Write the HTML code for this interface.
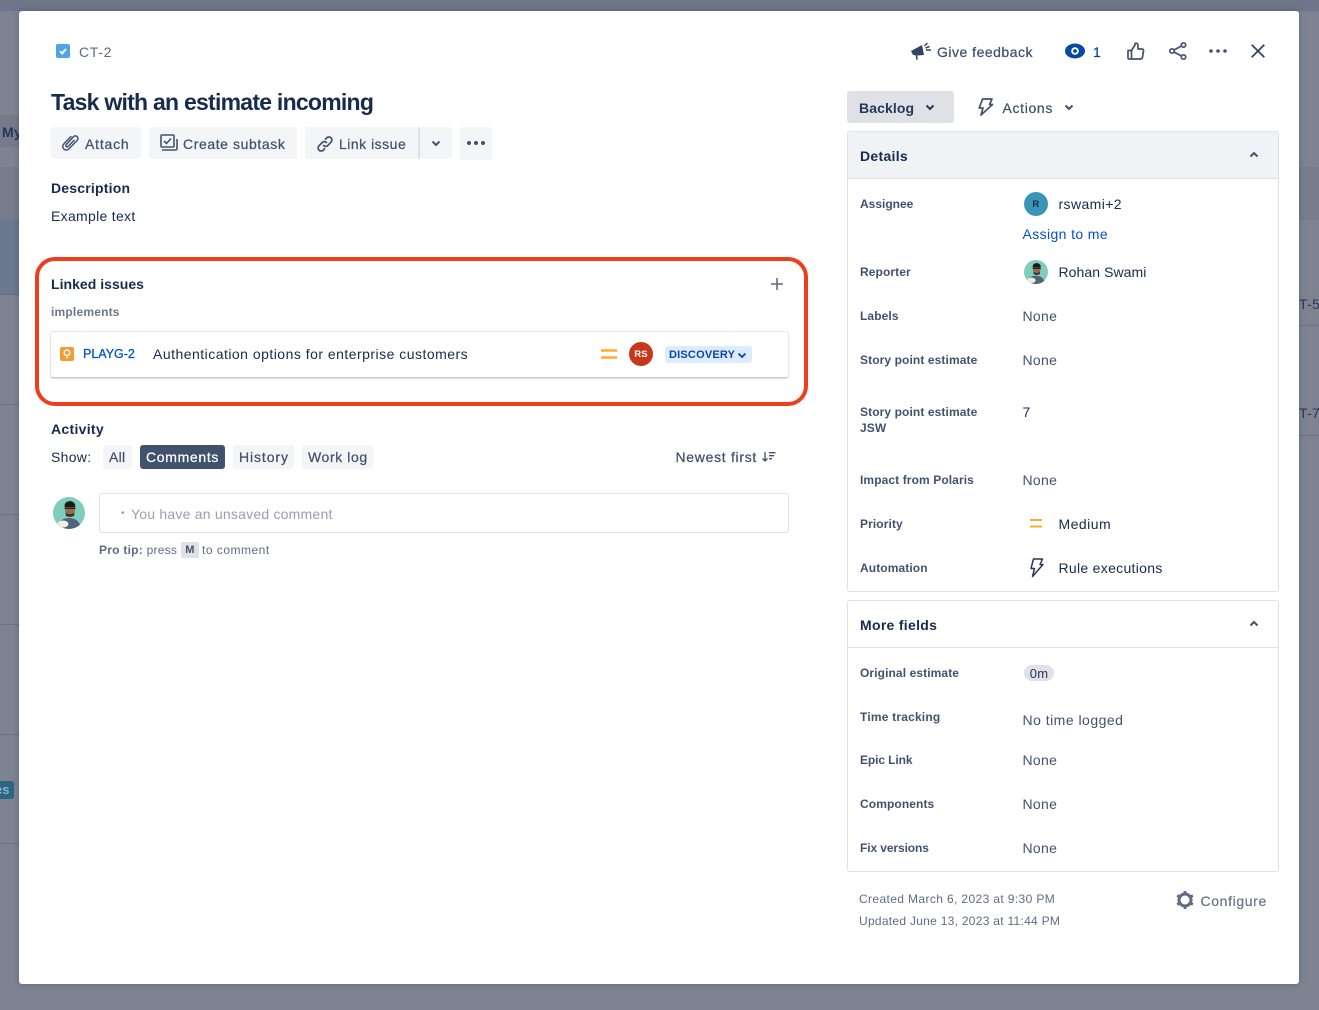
<!DOCTYPE html>
<html><head><meta charset="utf-8"><style>
html,body{margin:0;padding:0;width:1319px;height:1010px;overflow:hidden;background:#7d8391;font-family:"Liberation Sans",sans-serif}
.a,.t{position:absolute}
.t{white-space:nowrap;line-height:20px;font-size:14px;color:#172b4d;letter-spacing:.3px}
.b{font-weight:700}
.l{font-size:12px;font-weight:700;color:#42526e;letter-spacing:.1px}
.n{color:#42526e}
.m{-webkit-text-stroke:.25px currentColor}
.btn{position:absolute;background:#f4f5f7;border-radius:3px}
svg{position:absolute;overflow:visible}
</style></head><body>
<!-- background -->
<div class="a" style="left:0;top:0;width:1319px;height:11px;background:#6d7789"></div>
<div class="a" style="left:0;top:115px;width:19px;height:32px;background:#757b8b"></div>
<div class="a" style="left:0;top:167px;width:19px;height:53px;background:#767c8b"></div>
<div class="a" style="left:0;top:220px;width:19px;height:74px;background:#6b7890"></div>
<div class="a" style="left:0;top:294px;width:19px;height:1px;background:#656c7c"></div>
<div class="a" style="left:0;top:404px;width:19px;height:1px;background:#6c7282"></div>
<div class="a" style="left:0;top:514px;width:19px;height:1px;background:#6c7282"></div>
<div class="a" style="left:0;top:624px;width:19px;height:1px;background:#6c7282"></div>
<div class="a" style="left:0;top:734px;width:19px;height:1px;background:#6c7282"></div>
<div class="a" style="left:0;top:843px;width:19px;height:1px;background:#6c7282"></div>
<div class="a" style="left:1299px;top:167px;width:20px;height:53px;background:#767c8b"></div>
<div class="a" style="left:1299px;top:325px;width:20px;height:1px;background:#6c7282"></div>
<div class="a" style="left:1299px;top:435px;width:20px;height:1px;background:#6c7282"></div>
<div class="t b" style="left:2px;top:122px;color:#253858">My</div>
<div class="t" style="left:1299px;top:294px;color:#253858">T-5</div>
<div class="t" style="left:1299px;top:403px;color:#253858">T-7</div>
<div class="a" style="left:0;top:781px;width:14px;height:18px;background:#2a6584;border-radius:0 3px 3px 0;overflow:hidden"><span class="t b" style="left:-5px;top:-1px;color:#8fb0c2;font-size:13px;letter-spacing:0">es</span></div>

<!-- modal -->
<div class="a" style="left:19px;top:11px;width:1280px;height:973px;background:#fff;border-radius:3px;box-shadow:0 0 6px rgba(40,50,70,.35)"></div>

<!-- header -->
<svg style="left:56px;top:44px" width="14" height="14"><rect width="14" height="14" rx="2" fill="#4fa3e8"/><path d="M4 7.200l2.200 2.200L10 5" fill="none" stroke="#fff" stroke-width="2"/></svg>
<div class="t" style="left:79px;top:42px;color:#5e6c84;letter-spacing:.7px">CT-2</div>
<div class="t b" style="left:51px;top:86px;font-size:23px;line-height:32px;letter-spacing:-.75px;color:#172b4d">Task with an estimate incoming</div>

<!-- action buttons -->
<div class="btn" style="left:51px;top:127px;width:90px;height:32px"></div>
<svg style="left:61px;top:134px" width="19" height="19" viewBox="0 0 19 19" fill="none" stroke="#42526e" stroke-width="1.500" stroke-linecap="round"><path d="M10 2.500L2.800 10a3.500 3.500 0 0 0 5 5l8.400-8.600a2.600 2.600 0 0 0-3.700-3.700L5.200 10.600a1.300 1.300 0 0 0 1.900 1.900l6-6.200"/></svg>
<div class="t m" style="left:85px;top:134px;color:#42526e;letter-spacing:.8px">Attach</div>
<div class="btn" style="left:149px;top:127px;width:148px;height:32px"></div>
<svg style="left:160px;top:134px" width="19" height="19" viewBox="0 0 19 19" fill="none" stroke="#42526e" stroke-width="1.600"><rect x="1" y="1" width="13" height="12" rx="1"/><path d="M4 7l2.500 2.500L11 4.500"/><path d="M2 16h13.500a1.500 1.500 0 0 0 1.500-1.500V5"/></svg>
<div class="t m" style="left:183px;top:134px;color:#42526e;letter-spacing:.59px">Create subtask</div>
<div class="btn" style="left:305px;top:127px;width:113px;height:32px"></div>
<div class="a" style="left:418px;top:127px;width:2px;height:32px;background:#dfe1e6"></div>
<div class="btn" style="left:420px;top:127px;width:32px;height:32px"></div>
<svg style="left:316px;top:135px" width="18" height="18" viewBox="0 0 18 18" fill="none" stroke="#42526e" stroke-width="1.700" stroke-linecap="round"><path d="M7.500 10.500a3 3 0 0 0 4.300 0l3.200-3.300a3 3 0 0 0-4.300-4.300L9.500 4.200"/><path d="M10.500 7.500a3 3 0 0 0-4.300 0L3 10.800a3 3 0 0 0 4.300 4.300l1.200-1.300"/></svg>
<div class="t m" style="left:339px;top:134px;color:#42526e;letter-spacing:.5px">Link issue</div>
<svg style="left:431px;top:140px" width="10" height="7"><path d="M1.500 1.500L5 5l3.500-3.500" fill="none" stroke="#42526e" stroke-width="2"/></svg>
<div class="btn" style="left:460px;top:127px;width:32px;height:33px"></div>
<svg style="left:467px;top:141px" width="18" height="4" fill="#42526e"><circle cx="2" cy="2" r="2"/><circle cx="9" cy="2" r="2"/><circle cx="16" cy="2" r="2"/></svg>

<div class="t b" style="left:51px;top:178px;letter-spacing:.2px">Description</div>
<div class="t" style="left:51px;top:206px">Example text</div>

<!-- Linked issues highlight -->
<div class="a" style="left:35px;top:257px;width:765px;height:141px;border:4px solid #ee3f1c;border-radius:20px"></div>
<div class="t b" style="left:51px;top:274px;letter-spacing:.03px">Linked issues</div>
<svg style="left:771px;top:278px" width="12" height="12"><path d="M6 0v12M0 6h12" stroke="#5e6c84" stroke-width="1.600"/></svg>
<div class="t b" style="left:51px;top:302px;font-size:12px;color:#6b778c;letter-spacing:.2px">implements</div>
<div class="a" style="left:50px;top:331px;width:737px;height:45px;border:1px solid #e4e6ea;border-bottom:1px solid #c9ccd4;border-radius:3px;box-shadow:0 1px 1px rgba(9,30,66,.15)"></div>
<svg style="left:60px;top:347px" width="14" height="14" viewBox="0 0 14 14"><rect width="14" height="14" rx="2" fill="#f79a33"/><circle cx="7" cy="5.800" r="2.800" fill="none" stroke="#fff" stroke-width="1.500"/><path d="M5.800 10.500h2.400" stroke="#fff" stroke-width="1.500"/></svg>
<div class="t m" style="left:83px;top:344px;font-size:12.500px;color:#0052cc;letter-spacing:0">PLAYG-2</div>
<div class="t" style="left:153px;top:344px;letter-spacing:.48px">Authentication options for enterprise customers</div>
<svg style="left:601px;top:349px" width="16" height="10"><path d="M0 1.500h16M0 8.500h16" stroke="#ffab2e" stroke-width="2.400"/></svg>
<div class="a" style="left:629px;top:342px;width:24px;height:24px;border-radius:50%;background:#c9371a"></div>
<div class="t b" style="left:629px;top:344.500px;width:24px;text-align:center;font-size:9.500px;color:#fff;letter-spacing:.2px">RS</div>
<div class="a" style="left:665px;top:346px;width:87px;height:17px;background:#deebff;border-radius:3px"></div>
<div class="t b" style="left:669px;top:344.500px;font-size:11px;color:#0747a6;letter-spacing:.2px">DISCOVERY</div>
<svg style="left:737px;top:352px" width="10" height="7"><path d="M1.500 1.500L5 5l3.500-3.500" fill="none" stroke="#0747a6" stroke-width="1.800"/></svg>

<!-- Activity -->
<div class="t b" style="left:51px;top:419px">Activity</div>
<div class="t" style="left:51px;top:447px">Show:</div>
<div class="btn" style="left:103px;top:445px;width:29px;height:24px"></div>
<div class="t m" style="left:109px;top:447px;color:#42526e">All</div>
<div class="btn" style="left:140px;top:445px;width:85px;height:24px;background:#42526e"></div>
<div class="t m" style="left:146px;top:447px;color:#fff;letter-spacing:.67px">Comments</div>
<div class="btn" style="left:233px;top:445px;width:61px;height:24px"></div>
<div class="t m" style="left:239px;top:447px;color:#42526e;letter-spacing:.9px">History</div>
<div class="btn" style="left:302px;top:445px;width:71px;height:24px"></div>
<div class="t m" style="left:308px;top:447px;color:#42526e;letter-spacing:.6px">Work log</div>
<div class="t m" style="left:675.500px;top:447px;color:#42526e;letter-spacing:.7px">Newest first</div>
<svg style="left:762px;top:452px" width="14" height="10" fill="none" stroke="#42526e" stroke-width="1.300"><path d="M3 0v9M.5 6.500L3 9l2.500-2.500"/><path d="M7 .7h6.500M7 3.700h5M7 6.700h3"/></svg>

<svg style="left:53px;top:497px" width="32" height="32" viewBox="0 0 32 32"><defs><clipPath id="c1"><circle cx="16" cy="16" r="16"/></clipPath></defs><g clip-path="url(#c1)"><rect width="32" height="32" fill="#7fcdbb"/><path d="M4 32c1-8 6-11 12-11s11 3 12 11z" fill="#4f6478"/><ellipse cx="17" cy="12" rx="5" ry="7" fill="#9a6a4c"/><path d="M11.500 9c0-6 10-7 11 0l-1 1H12z" fill="#1f1a1a"/><path d="M12.500 15c1 3 8 3 9 0l-.5 4-4 1-4-1z" fill="#3a2e28"/><rect x="11.500" y="10.500" width="11" height="1.500" fill="#1d2b2b"/><ellipse cx="10" cy="27" rx="5.500" ry="3.500" fill="#f3efe3"/></g></svg>
<div class="a" style="left:99px;top:493px;width:688px;height:38px;border:1px solid #dfe1e6;border-radius:3px"></div>
<div class="t" style="left:121px;top:504px;color:#97a0af;font-size:10px">•</div>
<div class="t" style="left:131px;top:504px;color:#97a0af;letter-spacing:.22px">You have an unsaved comment</div>
<div class="t" style="left:99px;top:540px;font-size:12px;color:#5e6c84;letter-spacing:.25px"><b>Pro tip:</b> press</div>
<div class="a" style="left:181px;top:542px;width:18px;height:16px;background:#dfe1e6;border-radius:2px"></div>
<div class="t b" style="left:181px;top:540px;width:18px;text-align:center;font-size:11px;color:#42526e">M</div>
<div class="t" style="left:202px;top:540px;font-size:12px;color:#5e6c84;letter-spacing:.5px">to comment</div>

<!-- top right -->
<svg style="left:910px;top:41px" width="22" height="20" viewBox="0 0 22 20" fill="#344563"><path d="M1 10l11-6 2 10-6 .5-5-.5z"/><path d="M5.500 14l1 5 1.500-.5-1-4.500z"/><path d="M14.500 5l3-3M16 9h5M15.500 7l4-1.500" stroke="#344563" stroke-width="1.500"/></svg>
<div class="t m" style="left:937px;top:42px;color:#42526e;letter-spacing:.5px">Give feedback</div>
<svg style="left:1065px;top:43px" width="20" height="16" viewBox="0 0 20 16"><ellipse cx="10" cy="8" rx="10" ry="7.500" fill="#0747a6"/><circle cx="10" cy="8" r="3.800" fill="#fff"/><circle cx="10" cy="8" r="1.900" fill="#0747a6"/></svg>
<div class="t m" style="left:1093px;top:42px;color:#0747a6">1</div>
<svg style="left:1127px;top:42px" width="18" height="18" viewBox="0 0 18 18" fill="none" stroke="#42526e" stroke-width="1.700" stroke-linejoin="round"><path d="M1 8.500h3.500V17H2a1 1 0 0 1-1-1z"/><path d="M4.500 8.500L8 3V1.500c2-.8 3 .5 3 2.200V7h4a1.500 1.500 0 0 1 1.500 1.800l-1 6.500A2 2 0 0 1 13.500 17H4.500"/></svg>
<svg style="left:1169px;top:42px" width="18" height="18" viewBox="0 0 18 18" fill="none" stroke="#42526e" stroke-width="1.700"><circle cx="3" cy="9" r="2.200"/><circle cx="14.500" cy="3" r="2.200"/><circle cx="14.500" cy="15" r="2.200"/><path d="M5 8l7.500-4M5 10l7.500 4"/></svg>
<svg style="left:1209px;top:49px" width="18" height="4" fill="#42526e"><circle cx="2" cy="2" r="1.800"/><circle cx="9" cy="2" r="1.800"/><circle cx="16" cy="2" r="1.800"/></svg>
<svg style="left:1251px;top:44px" width="14" height="14"><path d="M.7.7l12.600 12.600M13.300.7L.7 13.300" stroke="#344563" stroke-width="1.800"/></svg>

<!-- status -->
<div class="btn" style="left:847px;top:91px;width:107px;height:32px;background:#dfe1e6"></div>
<div class="t b" style="left:859px;top:98px;color:#253858;letter-spacing:.1px">Backlog</div>
<svg style="left:925px;top:104px" width="10" height="7"><path d="M1.500 1.500L5 5l3.500-3.500" fill="none" stroke="#253858" stroke-width="2"/></svg>
<svg style="left:978px;top:98px" width="16" height="18" viewBox="0 0 16 18" fill="none" stroke="#42526e" stroke-width="1.700" stroke-linejoin="round"><path d="M4.500 1H14l-2.500 5.500h3L3 17l2-7H1.200z"/></svg>
<div class="t m" style="left:1002.500px;top:98px;color:#42526e;letter-spacing:.66px">Actions</div>
<svg style="left:1064px;top:104px" width="10" height="7"><path d="M1.500 1.500L5 5l3.500-3.500" fill="none" stroke="#42526e" stroke-width="2"/></svg>

<!-- Details -->
<div class="a" style="left:847px;top:131px;width:430px;height:459px;border:1px solid #dfe1e6;border-radius:3px"></div>
<div class="a" style="left:848px;top:132px;width:430px;height:46px;background:#f1f2f6;border-bottom:1px solid #dfe1e6;border-radius:3px 3px 0 0"></div>
<div class="t b" style="left:860px;top:146px">Details</div>
<svg style="left:1249px;top:151px" width="10" height="7"><path d="M1.500 5.500L5 2l3.500 3.500" fill="none" stroke="#42526e" stroke-width="2"/></svg>

<div class="t l" style="left:860px;top:194px;letter-spacing:0">Assignee</div>
<div class="a" style="left:1024px;top:192px;width:24px;height:24px;border-radius:50%;background:#3a95b4"></div>
<div class="t b" style="left:1024px;top:195px;width:24px;text-align:center;font-size:9.500px;color:#172b4d">R</div>
<div class="t" style="left:1058.500px;top:194px;letter-spacing:.4px">rswami+2</div>
<div class="t" style="left:1022.500px;top:224px;color:#0052cc;letter-spacing:.38px">Assign to me</div>

<div class="t l" style="left:860px;top:262px">Reporter</div>
<svg style="left:1024px;top:260px" width="24" height="24" viewBox="0 0 32 32"><defs><clipPath id="c2"><circle cx="16" cy="16" r="16"/></clipPath></defs><g clip-path="url(#c2)"><rect width="32" height="32" fill="#7fcdbb"/><path d="M4 32c1-8 6-11 12-11s11 3 12 11z" fill="#4f6478"/><ellipse cx="17" cy="12" rx="5" ry="7" fill="#9a6a4c"/><path d="M11.500 9c0-6 10-7 11 0l-1 1H12z" fill="#1f1a1a"/><path d="M12.500 15c1 3 8 3 9 0l-.5 4-4 1-4-1z" fill="#3a2e28"/><rect x="11.500" y="10.500" width="11" height="1.500" fill="#1d2b2b"/><ellipse cx="10" cy="27" rx="5.500" ry="3.500" fill="#f3efe3"/></g></svg>
<div class="t" style="left:1058.500px;top:262px;letter-spacing:.07px">Rohan Swami</div>

<div class="t l" style="left:860px;top:306px">Labels</div>
<div class="t n" style="left:1022.500px;top:306px">None</div>
<div class="t l" style="left:860px;top:350px">Story point estimate</div>
<div class="t n" style="left:1022.500px;top:350px">None</div>
<div class="t l" style="left:860px;top:402px">Story point estimate</div>
<div class="t l" style="left:860px;top:418px">JSW</div>
<div class="t" style="left:1022.500px;top:402px">7</div>
<div class="t l" style="left:860px;top:470px">Impact from Polaris</div>
<div class="t n" style="left:1022.500px;top:470px">None</div>
<div class="t l" style="left:860px;top:514px">Priority</div>
<svg style="left:1030px;top:519px" width="12" height="9"><path d="M0 1h12M0 7.500h12" stroke="#ffab2e" stroke-width="2"/></svg>
<div class="t" style="left:1058.500px;top:514px;letter-spacing:.47px">Medium</div>
<div class="t l" style="left:860px;top:558px">Automation</div>
<svg style="left:1030px;top:558px" width="14" height="19" viewBox="0 0 14 19" fill="none" stroke="#253858" stroke-width="1.500" stroke-linejoin="round"><path d="M3.500 1H12.500L10 6.500h3L2.500 18.500 4.500 10.500H1z"/></svg>
<div class="t" style="left:1058.500px;top:558px">Rule executions</div>

<!-- More fields -->
<div class="a" style="left:847px;top:600px;width:430px;height:270px;border:1px solid #dfe1e6;border-radius:3px"></div>
<div class="a" style="left:848px;top:647px;width:430px;height:1px;background:#dfe1e6"></div>
<div class="t b" style="left:860px;top:615px">More fields</div>
<svg style="left:1249px;top:620px" width="10" height="7"><path d="M1.500 5.500L5 2l3.500 3.500" fill="none" stroke="#42526e" stroke-width="2"/></svg>

<div class="t l" style="left:860px;top:663px">Original estimate</div>
<div class="a" style="left:1024px;top:665px;width:30px;height:16px;border-radius:8px;background:#dfe1e6"></div>
<div class="t" style="left:1024px;top:664px;width:30px;text-align:center;font-size:13px;color:#253858;letter-spacing:.2px">0m</div>
<div class="t l" style="left:860px;top:707px;letter-spacing:.2px">Time tracking</div>
<div class="t n" style="left:1022.500px;top:710px;letter-spacing:.48px">No time logged</div>
<div class="t l" style="left:860px;top:750px;letter-spacing:-.1px">Epic Link</div>
<div class="t n" style="left:1022.500px;top:750px">None</div>
<div class="t l" style="left:860px;top:794px">Components</div>
<div class="t n" style="left:1022.500px;top:794px">None</div>
<div class="t l" style="left:860px;top:838px;letter-spacing:-.1px">Fix versions</div>
<div class="t n" style="left:1022.500px;top:838px">None</div>

<!-- footer -->
<div class="t" style="left:859px;top:889px;font-size:12px;color:#5e6c84;letter-spacing:.375px">Created March 6, 2023 at 9:30 PM</div>
<div class="t" style="left:859px;top:911px;font-size:12px;color:#5e6c84;letter-spacing:.28px">Updated June 13, 2023 at 11:44 PM</div>
<svg style="left:1176px;top:891px" width="18" height="18" viewBox="0 0 18 18" fill="none"><circle cx="9" cy="9" r="6" stroke="#5e6c84" stroke-width="3"/><path d="M9 0v3M9 15v3M1.200 4.500l2.600 1.500M14.200 12l2.600 1.500M1.200 13.500l2.600-1.500M14.200 6l2.600-1.500" stroke="#5e6c84" stroke-width="2.800"/></svg>
<div class="t m" style="left:1200.500px;top:891px;color:#6b778c;letter-spacing:.63px">Configure</div>
</body></html>
